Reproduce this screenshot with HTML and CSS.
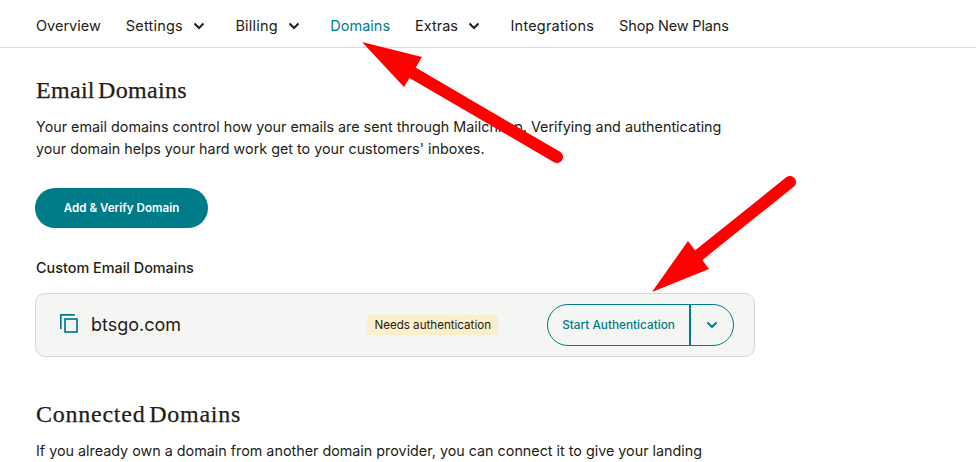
FILE: index.html
```html
<!DOCTYPE html>
<html lang="en">
<head>
    <meta charset="UTF-8">
    <meta name="viewport" content="width=device-width, initial-scale=1.0">
    <title>Domains</title>
    <link rel="stylesheet" href="styles.css">
</head>
<body>
    <nav class="tabs">
        <a class="tab">Overview</a>
        <a class="tab spaced">Settings
            <svg class="caret" viewBox="0 0 12 8"><path d="M1.5 1.5 6 6l4.5-4.5"/></svg>
        </a>
        <a class="tab spaced">Billing
            <svg class="caret" viewBox="0 0 12 8"><path d="M1.5 1.5 6 6l4.5-4.5"/></svg>
        </a>
        <a class="tab active">Domains</a>
        <a class="tab">Extras
            <svg class="caret" viewBox="0 0 12 8"><path d="M1.5 1.5 6 6l4.5-4.5"/></svg>
        </a>
        <a class="tab spaced">Integrations</a>
        <a class="tab tight">Shop New Plans</a>
    </nav>

    <main class="content">
        <h2>Email Domains</h2>
        <p class="intro">Your email domains control how your emails are sent through Mailchimp. Verifying and authenticating your domain helps your hard work get to your customers' inboxes.</p>
        <button class="btn-primary">Add &amp; Verify Domain</button>

        <h4>Custom Email Domains</h4>
        <div class="domain-card">
            <svg class="domain-icon" viewBox="0 0 18 19">
                <path d="M.8 15V.8h14" />
                <rect x="5" y="5" width="12" height="13" />
            </svg>
            <span class="domain-name">btsgo.com</span>
            <span class="badge">Needs authentication</span>
            <div class="split-btn">
                <button class="split-main">Start Authentication</button>
                <button class="split-toggle">
                    <svg class="caret" viewBox="0 0 12 8"><path d="M1.5 1.5 6 6l4.5-4.5"/></svg>
                </button>
            </div>
        </div>

        <h2 class="second">Connected Domains</h2>
        <p class="intro">If you already own a domain from another domain provider, you can connect it to give your landing</p>
    </main>

    <!-- red annotation arrows drawn on top of the page -->
    <svg class="arrows" viewBox="0 0 976 462">
        <path class="shaft" d="M413 73 557 157"/>
        <path class="head" d="M362 42 422 57 404 87Z"/>
        <path class="shaft" d="M699 255 790 182"/>
        <path class="head" d="M652 292 688 241 709 269Z"/>
    </svg>
</body>
</html>
```

FILE: styles.css
```css
html, body {
    margin: 0;
    height: 462px;
    overflow: hidden;
}
body {
    position: relative;
    font-family: Inter, "Liberation Sans", sans-serif;
    background-color: #fff;
    color: #241c15;
}
.tabs {
    display: flex;
    align-items: center;
    gap: 25px;
    height: 43px;
    padding: 4px 0 0 36px;
    border-bottom: 1px solid #d9d9d9;
    font-size: 14.5px;
}
.tab {
    display: flex;
    align-items: center;
}
.spaced {
    letter-spacing: 0.2px;
}
.tight {
    letter-spacing: -0.15px;
}
.active {
    color: #007c89;
}
.caret {
    width: 12px;
    height: 8px;
    margin-left: 10px;
    margin-right: 5.5px;
    fill: none;
    stroke: currentColor;
    stroke-width: 2;
}
.content {
    width: 720px;
    padding-left: 35px;
}
h2 {
    margin: 28px 0 0;
    padding-left: 1px;
    font-family: "Liberation Serif", serif;
    font-size: 24px;
    font-weight: 400;
    line-height: 28px;
    letter-spacing: 0.3px;
    word-spacing: -3px;
    -webkit-text-stroke: 0.25px #241c15;
}
.second {
    margin-top: 43px;
    letter-spacing: 0.75px;
}
.intro {
    margin: 12px 0 0;
    padding-left: 1px;
    font-size: 14.33px;
    line-height: 22px;
    width: 700px;
}
.btn-primary {
    display: block;
    width: 173px;
    height: 40px;
    margin-top: 28px;
    border: none;
    border-radius: 20px;
    background-color: #007c89;
    color: #fff;
    font: 600 11.6px Inter, sans-serif;
}
h4 {
    margin: 30px 0 0;
    padding-left: 1px;
    font-size: 14.4px;
    font-weight: 500;
    line-height: 20px;
}
.domain-card {
    display: flex;
    align-items: center;
    box-sizing: border-box;
    height: 64px;
    margin-top: 15px;
    padding: 0 20px 0 24px;
    background-color: #f5f5f3;
    border: 1px solid #d6d6d6;
    border-radius: 10px;
}
.domain-icon {
    width: 18px;
    height: 19px;
    margin-right: 13px;
    margin-bottom: 4px;
    fill: none;
    stroke: #007c89;
    stroke-width: 1.7;
}
.domain-name {
    margin-bottom: 2px;
    font-size: 18px;
}
.badge {
    margin-left: auto;
    margin-right: 49px;
    padding: 3px 7px;
    background-color: #fbeecb;
    border-radius: 3px;
    font-size: 11.6px;
}
.split-btn {
    display: flex;
    height: 40px;
    border: 1px solid #007c89;
    border-radius: 21px;
    color: #007c89;
}
.split-btn button {
    border: none;
    background: none;
    color: inherit;
    font: 500 11.8px Inter, sans-serif;
}
.split-main {
    width: 143px;
    padding: 0;
    border-right: 2px solid #007c89 !important;
}
.split-toggle {
    width: 42px;
    padding: 0;
}
.split-toggle .caret {
    display: block;
    margin: 0 auto;
}
.arrows {
    position: absolute;
    left: 0;
    top: 0;
    width: 976px;
    height: 462px;
    pointer-events: none;
}
.shaft {
    fill: none;
    stroke: #ff0000;
    stroke-width: 12;
    stroke-linecap: round;
}
.head {
    fill: #ff0000;
}
```
